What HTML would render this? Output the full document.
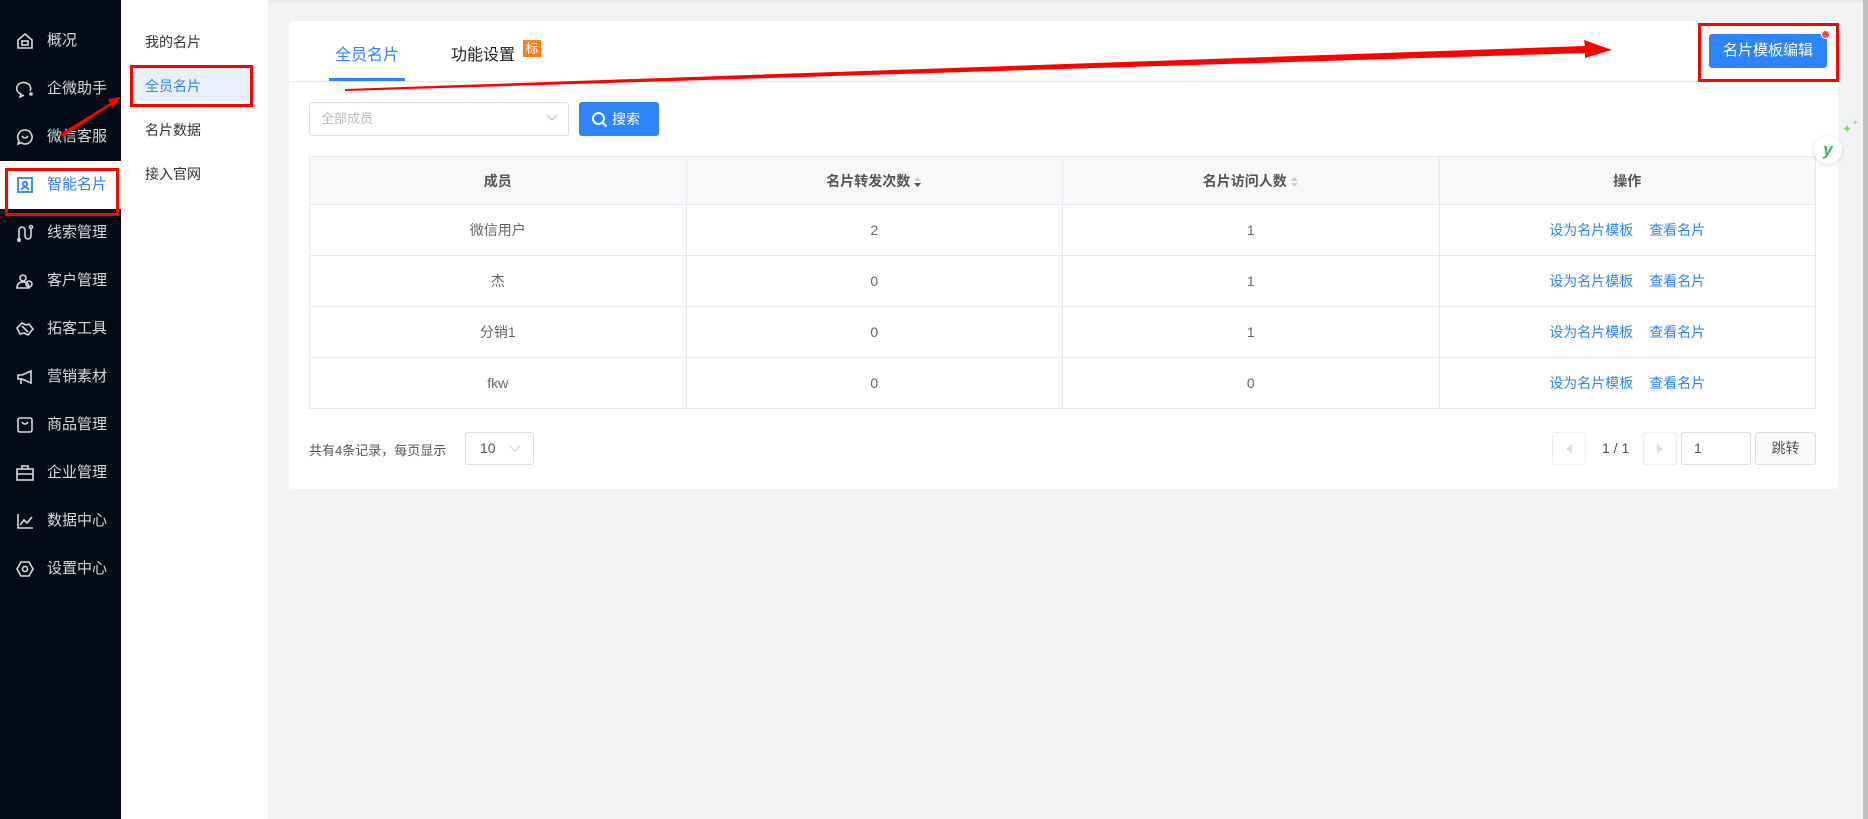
<!DOCTYPE html>
<html><head><meta charset="utf-8"><style>
*{margin:0;padding:0;box-sizing:border-box}
body{width:1868px;height:819px;overflow:hidden;background:#f2f3f5;font-family:"Liberation Sans","Noto Sans CJK SC",sans-serif;position:relative;font-size:14px;color:#333}
.abs{position:absolute}
.side{left:0;top:0;width:121px;height:819px;background:#020b16}
.mi{position:absolute;left:0;width:121px;height:48px;color:#d7d9dc;font-size:15px;line-height:48px}
.mi span{position:absolute;left:47px}
.mi svg{position:absolute;left:16px;top:15px}
.sub{left:121px;top:0;width:147px;height:819px;background:#fff}
.si{position:absolute;left:24px;font-size:14px;color:#333}
.card{left:289px;top:21px;width:1549px;height:468px;background:#fff;border-radius:4px}
table{border-collapse:collapse;position:absolute;left:309px;top:156px;width:1507px;table-layout:fixed}
td,th{border:1px solid #e8eaef;text-align:center;height:51px;color:#666;font-size:14px;font-weight:normal}
th{background:#f8f8fa;height:48px;color:#555;font-weight:bold}
.a{color:#2d84fb;margin:0 8px}
.box{border:1px solid #dcdfe6;border-radius:3px;background:#fff}
.srt{display:inline-block;vertical-align:middle;margin-left:3px}
</style></head><body>
<div class="abs" style="left:0;top:0;width:1868px;height:3px;background:#e9eaed"></div>
<div class="abs side"></div>
<div class="abs" style="left:0;top:161px;width:121px;height:48px;background:#fff"></div>
<div class="mi" style="top:17px"><svg width="18" height="18" viewBox="0 0 18 18" fill="none" stroke="#d7d9dc" stroke-width="1.6"><path d="M2 8L9 2l7 6v8H2z"/><rect x="6" y="9" width="6" height="4"/></svg><span>概况</span></div>
<div class="mi" style="top:65px"><svg width="18" height="18" viewBox="0 0 18 18" fill="none" stroke="#d7d9dc" stroke-width="1.6"><path d="M14 11A7 6 0 1 0 5 14l-1 3 4-2"/><circle cx="15" cy="14" r="1"/></svg><span>企微助手</span></div>
<div class="mi" style="top:113px"><svg width="18" height="18" viewBox="0 0 18 18" fill="none" stroke="#d7d9dc" stroke-width="1.6"><path d="M9 2a7 7 0 1 1-4 12.7L2 16l1-3A7 7 0 0 1 9 2z"/><path d="M6 8q3 4 6 0"/></svg><span>微信客服</span></div>
<div class="mi" style="top:161px;color:#2d84fb"><svg width="18" height="18" viewBox="0 0 18 18" fill="none" stroke="#2d84fb" stroke-width="1.8"><rect x="2" y="2" width="14" height="14"/><circle cx="9" cy="8" r="2.2"/><path d="M5 14q4-6 8 0"/></svg><span>智能名片</span></div>
<div class="mi" style="top:209px"><svg width="18" height="18" viewBox="0 0 18 18" fill="none" stroke="#d7d9dc" stroke-width="1.6"><path d="M3 16V6a3 3 0 0 1 6 0v6a3 3 0 0 0 6 0V4"/><circle cx="15" cy="3" r="1.5"/><circle cx="3" cy="16" r="1.2"/></svg><span>线索管理</span></div>
<div class="mi" style="top:257px"><svg width="18" height="18" viewBox="0 0 18 18" fill="none" stroke="#d7d9dc" stroke-width="1.6"><circle cx="7" cy="6" r="3"/><path d="M1 16q0-6 6-6t6 6z"/><circle cx="13" cy="12" r="3"/></svg><span>客户管理</span></div>
<div class="mi" style="top:305px"><svg width="18" height="18" viewBox="0 0 18 18" fill="none" stroke="#d7d9dc" stroke-width="1.6"><path d="M1 8l5-5 4 2 3-1 4 5-5 6-4-2-4 1z"/><path d="M6 6l6 6"/></svg><span>拓客工具</span></div>
<div class="mi" style="top:353px"><svg width="18" height="18" viewBox="0 0 18 18" fill="none" stroke="#d7d9dc" stroke-width="1.6"><path d="M2 7h4l9-4v12l-9-4H2z"/><path d="M5 11v5"/></svg><span>营销素材</span></div>
<div class="mi" style="top:401px"><svg width="18" height="18" viewBox="0 0 18 18" fill="none" stroke="#d7d9dc" stroke-width="1.6"><rect x="2" y="2" width="14" height="14" rx="2"/><path d="M6 6q3 4 6 0"/></svg><span>商品管理</span></div>
<div class="mi" style="top:449px"><svg width="18" height="18" viewBox="0 0 18 18" fill="none" stroke="#d7d9dc" stroke-width="1.6"><rect x="1" y="5" width="16" height="11"/><path d="M6 5V2h6v3M1 10h16"/></svg><span>企业管理</span></div>
<div class="mi" style="top:497px"><svg width="18" height="18" viewBox="0 0 18 18" fill="none" stroke="#d7d9dc" stroke-width="1.6"><path d="M2 2v14h15"/><path d="M4 13l4-5 3 3 5-6"/></svg><span>数据中心</span></div>
<div class="mi" style="top:545px"><svg width="18" height="18" viewBox="0 0 18 18" fill="none" stroke="#d7d9dc" stroke-width="1.6"><path d="M5 2h8l4 7-4 7H5L1 9z"/><circle cx="9" cy="9" r="2.5"/></svg><span>设置中心</span></div>
<div class="abs" style="left:5px;top:168px;width:114px;height:48px;border:3px solid #f00"></div>

<div class="abs sub"></div>
<div class="abs" style="left:135px;top:67px;width:119px;height:34px;background:#e8f0fd;border-radius:3px"></div>
<div class="si abs" style="left:145px;top:32px">我的名片</div>
<div class="si abs" style="left:145px;top:76px;color:#2d84fb">全员名片</div>
<div class="si abs" style="left:145px;top:120px">名片数据</div>
<div class="si abs" style="left:145px;top:164px">接入官网</div>
<div class="abs" style="left:130px;top:65px;width:123px;height:42px;border:3px solid #f00"></div>

<div class="abs card"></div>
<div class="abs" style="left:289px;top:81px;width:1549px;height:1px;background:#e8eaef"></div>
<div class="abs" style="left:335px;top:41px;font-size:16px;color:#2d84fb">全员名片</div>
<div class="abs" style="left:329px;top:78px;width:76px;height:3px;background:#2d84fb"></div>
<div class="abs" style="left:451px;top:41px;font-size:16px;color:#222">功能设置</div>
<div class="abs" style="left:523px;top:40px;width:18px;height:17px;background:#f58220;color:#fff;font-size:13px;text-align:center;line-height:17px">标</div>
<div class="abs" style="left:1709px;top:34px;width:118px;height:34px;background:#2d84fb;border-radius:3px;color:#fff;font-size:15px;text-align:center;line-height:34px">名片模板编辑</div>
<div class="abs" style="left:1821px;top:30px;width:9px;height:9px;border-radius:50%;background:#f44;border:1px solid #fff"></div>
<div class="abs" style="left:1698px;top:23px;width:141px;height:59px;border:3px solid #f00"></div>

<div class="abs box" style="left:309px;top:102px;width:260px;height:34px;color:#bbb;padding-left:11px;line-height:32px;font-size:13px">全部成员<svg class="abs" style="right:10px;top:11px" width="12" height="8"><path d="M1 1l5 5 5-5" fill="none" stroke="#bbb"/></svg></div>
<div class="abs" style="left:579px;top:102px;width:80px;height:34px;background:#2d84fb;border-radius:3px;color:#fff;font-size:14px;line-height:34px;padding-left:33px">搜索<svg class="abs" style="left:12px;top:9px" width="17" height="17"><circle cx="7.5" cy="7.5" r="5.5" fill="none" stroke="#fff" stroke-width="2"/><path d="M11.5 11.5l4 4" stroke="#fff" stroke-width="2"/></svg></div>

<table><tr><th>成员</th><th>名片转发次数<svg class="srt" width="9" height="12"><path d="M1 5l3.5-4 3.5 4z" fill="#ccc"/><path d="M1 7l3.5 4 3.5-4z" fill="#555"/></svg></th><th>名片访问人数<svg class="srt" width="9" height="12"><path d="M1 5l3.5-4 3.5 4z" fill="#ccc"/><path d="M1 7l3.5 4 3.5-4z" fill="#ccc"/></svg></th><th>操作</th></tr>
<tr><td>微信用户</td><td>2</td><td>1</td><td><span class="a">设为名片模板</span><span class="a">查看名片</span></td></tr>
<tr><td>杰</td><td>0</td><td>1</td><td><span class="a">设为名片模板</span><span class="a">查看名片</span></td></tr>
<tr><td>分销1</td><td>0</td><td>1</td><td><span class="a">设为名片模板</span><span class="a">查看名片</span></td></tr>
<tr><td>fkw</td><td>0</td><td>0</td><td><span class="a">设为名片模板</span><span class="a">查看名片</span></td></tr></table>

<div class="abs" style="left:309px;top:440px;font-size:13px;color:#555">共有4条记录，每页显示</div>
<div class="abs box" style="left:465px;top:432px;width:69px;height:33px;padding-left:14px;line-height:31px;color:#555">10<svg class="abs" style="right:12px;top:12px" width="12" height="8"><path d="M1 1l5 5 5-5" fill="none" stroke="#ccc"/></svg></div>
<div class="abs box" style="left:1552px;top:432px;width:34px;height:33px;border-color:#eee"><svg class="abs" style="left:13px;top:11px" width="8" height="10"><path d="M6 0L0 5l6 5z" fill="#ddd"/></svg></div>
<div class="abs" style="left:1602px;top:440px;color:#555">1 / 1</div>
<div class="abs box" style="left:1643px;top:432px;width:34px;height:33px;border-color:#eee"><svg class="abs" style="left:13px;top:11px" width="8" height="10"><path d="M0 0l6 5-6 5z" fill="#ddd"/></svg></div>
<div class="abs box" style="left:1681px;top:432px;width:70px;height:33px;padding-left:12px;line-height:31px;color:#555">1</div>
<div class="abs box" style="left:1755px;top:432px;width:61px;height:33px;background:#fafafa;text-align:center;line-height:31px;color:#555">跳转</div>

<div class="abs" style="left:1814px;top:136px;width:28px;height:28px;border-radius:50%;background:#fff;box-shadow:0 1px 4px rgba(0,0,0,.15);color:#2fb55a;font-weight:bold;font-size:17px;text-align:center;line-height:28px;font-style:italic">y</div>
<div class="abs" style="left:1842px;top:122px;color:#7ed67e;font-size:12px">✦</div>
<div class="abs" style="left:1852px;top:118px;color:#9de09d;font-size:8px">✦</div>
<div class="abs" style="left:1863px;top:0;width:5px;height:819px;background:#c1c1c1"></div>

<svg class="abs" style="left:0;top:0" width="1868" height="819">
<polygon points="60,134 110,103 108,99 121,97 113,108 111,105 63,137" fill="#f00"/>
<polygon points="345,89 1585,46 1584,40 1612,50 1585,58 1585,53 345,91" fill="#f00"/>
</svg>
</body></html>
